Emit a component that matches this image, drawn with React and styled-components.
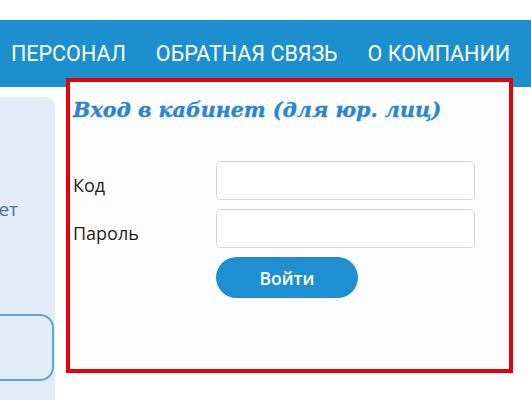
import React from "react";
import styled, { createGlobalStyle } from "styled-components";

const Global = createGlobalStyle`
  html, body { margin: 0; padding: 0; background: #ffffff; }
  * { box-sizing: border-box; }
  #root { height: 100vh; }
`;

const Page = styled.div`
  height: 400px;
  display: flex;
  flex-direction: column;
  overflow: hidden;
  background: #ffffff;
`;

const TopStrip = styled.div`
  height: 20px;
  flex: none;
  background: #ffffff;
`;

const Nav = styled.nav`
  height: 67px;
  flex: none;
  background: #1c8fcf;
  display: flex;
  align-items: center;
  padding-left: 11px;
  gap: 30px;
  white-space: nowrap;
`;

const NavItem = styled.a`
  font-family: Roboto, "Liberation Sans", sans-serif;
  font-size: 21.5px;
  font-weight: 400;
  color: #ffffff;
  text-transform: uppercase;
  text-decoration: none;
  line-height: 1;
`;

const Body = styled.div`
  flex: 1;
  display: flex;
  align-items: flex-start;
  gap: 11px;
`;

const SidePanel = styled.aside`
  width: 55px;
  flex: none;
  align-self: stretch;
  margin-top: 10px;
  background: #e3ecf8;
  border-top-right-radius: 10px;
  overflow: hidden;
  display: flex;
  flex-direction: column;
  align-items: flex-end;
  padding-top: 99px;
`;

const SideText = styled.div`
  font-family: "Open Sans", "Liberation Sans", sans-serif;
  font-size: 19px;
  line-height: 26px;
  color: #4f6f95;
  white-space: nowrap;
  padding-right: 37px;
`;

const SideCard = styled.div`
  width: 90px;
  height: 67px;
  margin-top: 92px;
  margin-right: 1px;
  border: 2px solid #5aa8e0;
  border-radius: 14px;
  background: #e3edf9;
  flex: none;
`;

const LoginBox = styled.section`
  position: relative;
  z-index: 1;
  margin-top: -9px;
  width: 447px;
  height: 295px;
  border: 4px solid #e6000a;
  background: #fdfdfd;
  padding: 16px 0 0 3px;
`;

const Title = styled.h2`
  margin: 0 0 38px 0;
  font-family: "DejaVu Serif", "Liberation Serif", serif;
  font-style: italic;
  font-weight: 700;
  font-size: 20.6px;
  line-height: 25px;
  color: #2787cf;
  -webkit-text-stroke: 0.35px #2787cf;
  white-space: nowrap;
`;

const Form = styled.form`
  display: grid;
  grid-template-columns: 143px 259px;
  row-gap: 9px;
  margin: 0;
`;

const Label = styled.label`
  font-family: "Open Sans", "Liberation Sans", sans-serif;
  font-size: 18px;
  line-height: 24.5px;
  color: #1e1e1e;
  padding-top: 12px;
`;

const Input = styled.input`
  width: 259px;
  height: 39px;
  border: 1.5px solid #d6d6d6;
  border-radius: 5px;
  background: #ffffff;
  outline: none;
  padding: 0 10px;
  font-size: 16px;
`;

const Button = styled.button`
  grid-column: 2;
  width: 142px;
  height: 41px;
  border: none;
  border-radius: 21px;
  background: #1e8fd0;
  color: #ffffff;
  font-family: "Open Sans", "Liberation Sans", sans-serif;
  font-size: 17.5px;
  font-weight: 600;
  cursor: pointer;
  padding: 0;
`;

export default function App() {
  return (
    <Page>
      <Global />
      <TopStrip />
      <Nav>
        <NavItem href="#">Персонал</NavItem>
        <NavItem href="#">Обратная связь</NavItem>
        <NavItem href="#">О компании</NavItem>
      </Nav>
      <Body>
        <SidePanel>
          <SideText>Личный кабинет</SideText>
          <SideCard />
        </SidePanel>
        <LoginBox>
          <Title>Вход в кабинет (для юр. лиц)</Title>
          <Form onSubmit={(e) => e.preventDefault()}>
            <Label htmlFor="code">Код</Label>
            <Input id="code" type="text" />
            <Label htmlFor="pass">Пароль</Label>
            <Input id="pass" type="password" />
            <Button type="submit">Войти</Button>
          </Form>
        </LoginBox>
      </Body>
    </Page>
  );
}
